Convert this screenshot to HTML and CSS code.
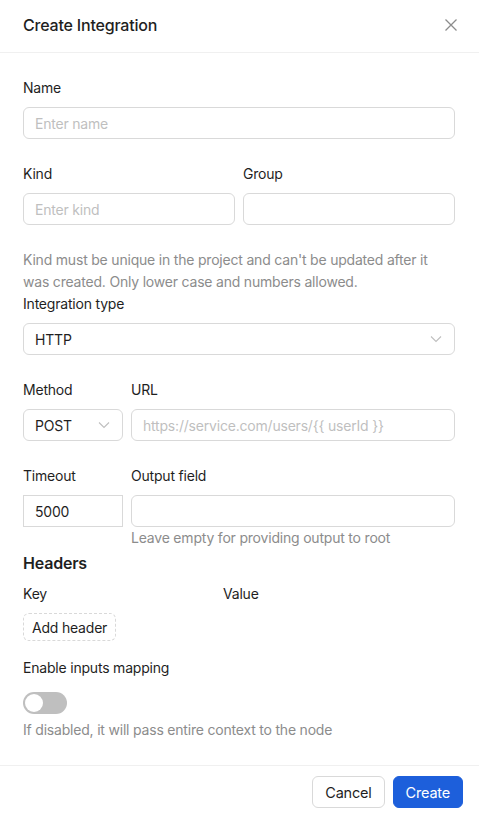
FILE: index.html
```html
<!DOCTYPE html>
<html lang="en">
<head>
  <meta charset="UTF-8">
  <title>Create Integration</title>
  <link rel="stylesheet" href="styles.css">
</head>
<body>
  <div class="modal">
    <div class="modal-header">
      <h3 class="modal-title">Create Integration</h3>
      <span class="close">
        <svg width="14" height="14" viewBox="0 0 14 14"><path d="M1.5 1.5 L12.5 12.5 M12.5 1.5 L1.5 12.5" stroke="#8c8c8c" stroke-width="1.3" fill="none"/></svg>
      </span>
    </div>

    <div class="modal-body">
      <div class="field">
        <label class="label">Name</label>
        <input class="input" type="text" placeholder="Enter name">
      </div>

      <div class="row half">
        <div class="field">
          <label class="label">Kind</label>
          <input class="input" type="text" placeholder="Enter kind">
        </div>
        <div class="field">
          <label class="label">Group</label>
          <input class="input" type="text">
        </div>
      </div>
      <p class="help">Kind must be unique in the project and can't be updated after it was created. Only lower case and numbers allowed.</p>

      <div class="field">
        <label class="label">Integration type</label>
        <div class="select">
          <span>HTTP</span>
          <svg class="chev" width="12" height="8" viewBox="0 0 12 8"><path d="M1 1.5 L6 6.5 L11 1.5" stroke="#bfbfbf" stroke-width="1.1" fill="none"/></svg>
        </div>
      </div>

      <div class="row narrow">
        <div class="field">
          <label class="label">Method</label>
          <div class="select">
            <span>POST</span>
            <svg class="chev" width="12" height="8" viewBox="0 0 12 8"><path d="M1 1.5 L6 6.5 L11 1.5" stroke="#bfbfbf" stroke-width="1.1" fill="none"/></svg>
          </div>
        </div>
        <div class="field">
          <label class="label">URL</label>
          <input class="input" type="text" placeholder="https://service.com/users/{{ userId }}">
        </div>
      </div>

      <div class="row narrow last">
        <div class="field">
          <label class="label">Timeout</label>
          <input class="input square" type="text" value="5000">
        </div>
        <div class="field">
          <label class="label">Output field</label>
          <input class="input" type="text">
          <p class="help">Leave empty for providing output to root</p>
        </div>
      </div>

      <h4 class="section">Headers</h4>
      <div class="headers-grid">
        <span class="label">Key</span>
        <span class="label">Value</span>
      </div>
      <button class="btn-dashed">Add header</button>

      <div class="field switch-field">
        <label class="label">Enable inputs mapping</label>
        <div class="control">
          <span class="switch"><span class="knob"></span></span>
        </div>
        <p class="help">If disabled, it will pass entire context to the node</p>
      </div>
    </div>

    <div class="modal-footer">
      <button class="btn">Cancel</button>
      <button class="btn primary">Create</button>
    </div>
  </div>
</body>
</html>
```

FILE: styles.css
```css
* { box-sizing: border-box; }
body { margin: 0; background: #fff; font-family: Inter, "Noto Sans", sans-serif; font-size: 14px; letter-spacing: -0.2px; color: #1f1f1f; }
.modal { width: 479px; height: 814px; background: #fff; display: flex; flex-direction: column; }
.modal-header { height: 53px; padding: 0 23px; display: flex; align-items: center; justify-content: space-between; border-bottom: 1px solid #f0f0f0; }
.modal-title { margin: 0; font-size: 16px; font-weight: 500; line-height: 24px; padding-bottom: 3px; }
.close { width: 16px; height: 16px; display: flex; align-items: center; justify-content: center; margin-right: -3px; padding-bottom: 3px; }
.modal-body { padding: 24px 24px 0 23px; flex: 1; }
.field { display: flex; flex-direction: column; margin-bottom: 24px; min-width: 0; }
.label { line-height: 22px; display: block; margin-bottom: 8px; }
.input { height: 32px; width: 100%; border: 1px solid #d9d9d9; border-radius: 6px; padding: 4px 11px; font: inherit; letter-spacing: inherit; color: #1f1f1f; outline: none; background: #fff; }
.input::placeholder { color: #bfbfbf; }
.input.square { border-radius: 0; }
.row { display: grid; gap: 8px; }
.row.half { grid-template-columns: 1fr 1fr; }
.row.narrow { grid-template-columns: 100px 1fr; }
.row.last .field { margin-bottom: 0; }
.help { margin: 0; color: #8c8c8c; line-height: 22px; }
.select { height: 32px; border: 1px solid #d9d9d9; border-radius: 6px; padding: 0 11px; display: flex; align-items: center; justify-content: space-between; }
.chev { margin-right: 1px; }
.section { margin: 2px 0 8px; font-size: 16px; font-weight: 600; line-height: 24px; }
.headers-grid { display: grid; grid-template-columns: 200px 1fr; }
.btn-dashed { height: 28px; padding: 0 8px; border: 1px dashed #d9d9d9; border-radius: 6px; background: #fff; font: inherit; letter-spacing: inherit; color: #1f1f1f; margin-bottom: 16px; }
.switch-field { margin-bottom: 0; }
.control { height: 32px; display: flex; align-items: center; }
.switch { width: 44px; height: 22px; border-radius: 11px; background: #bfbfbf; position: relative; display: inline-block; }
.knob { position: absolute; top: 2px; left: 2px; width: 18px; height: 18px; border-radius: 50%; background: #fff; }
.modal-footer { border-top: 1px solid #f0f0f0; padding: 10px 16px 8px; display: flex; justify-content: flex-end; gap: 8px; height: 49px; }
.btn { height: 32px; padding: 0 12px; border: 1px solid #d9d9d9; border-radius: 6px; background: #fff; font: inherit; font-size: 14.5px; letter-spacing: inherit; color: #1f1f1f; }
.btn.primary { background: #1d5fdb; border-color: #1d5fdb; color: #fff; }
```
